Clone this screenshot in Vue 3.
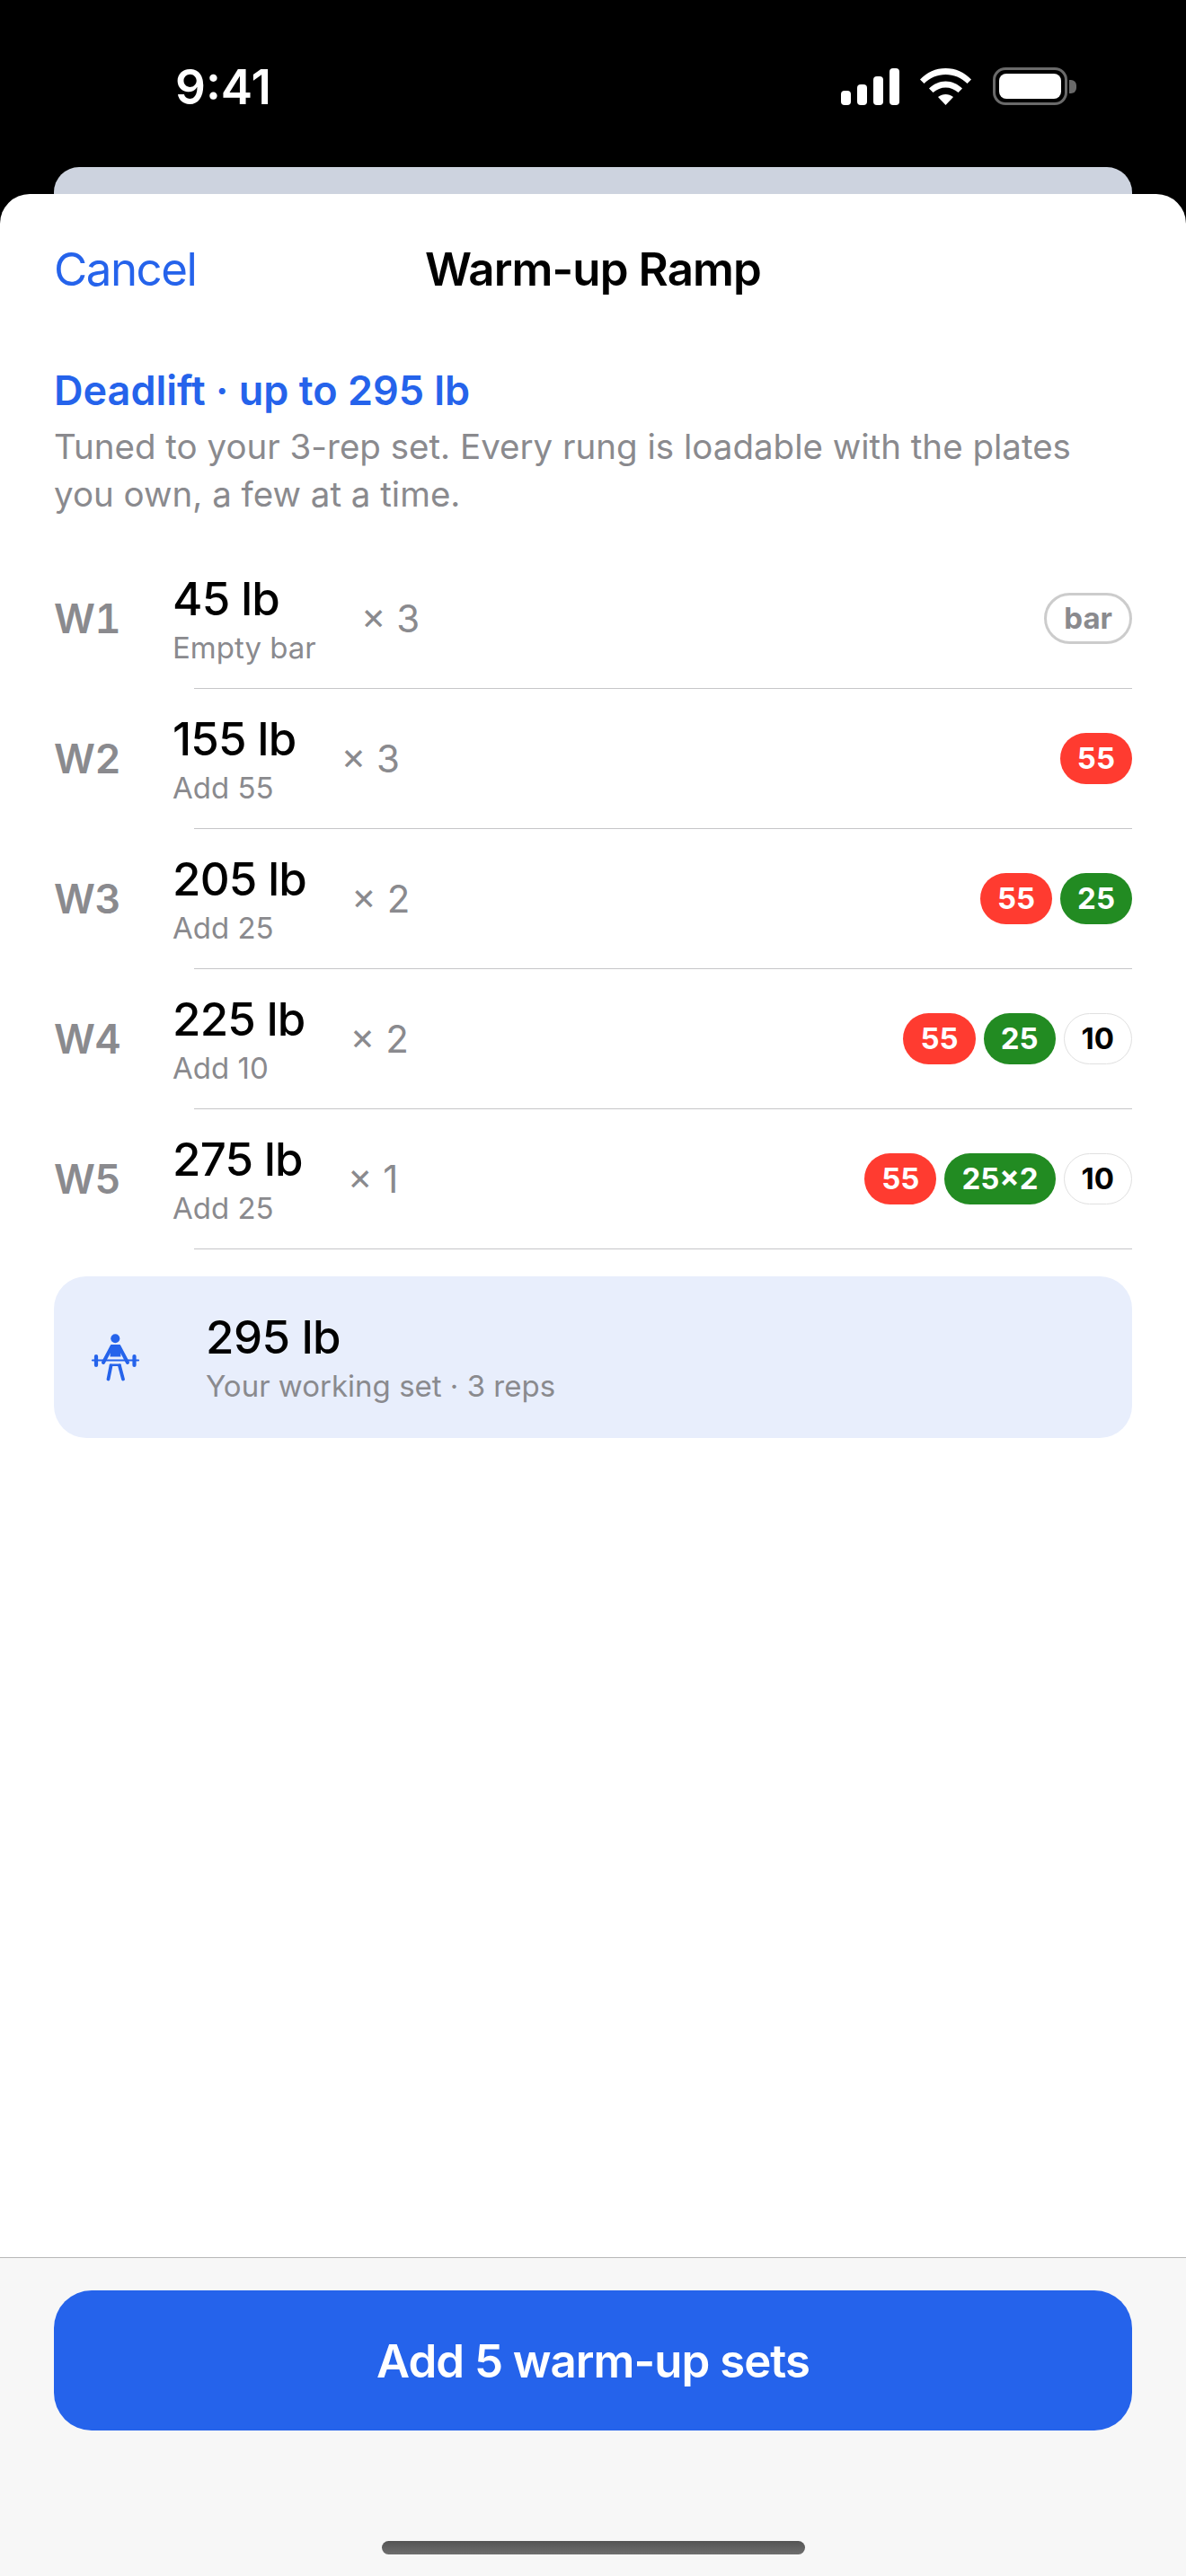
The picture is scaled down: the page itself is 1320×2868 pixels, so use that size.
<script setup>
const rungs = [
  { id: 'W1', weight: '45 lb', note: 'Empty bar', reps: '× 3', plates: [{ label: 'bar', kind: 'bar' }] },
  { id: 'W2', weight: '155 lb', note: 'Add 55', reps: '× 3', plates: [{ label: '55', kind: 'red' }] },
  {
    id: 'W3',
    weight: '205 lb',
    note: 'Add 25',
    reps: '× 2',
    plates: [
      { label: '55', kind: 'red' },
      { label: '25', kind: 'green' },
    ],
  },
  {
    id: 'W4',
    weight: '225 lb',
    note: 'Add 10',
    reps: '× 2',
    plates: [
      { label: '55', kind: 'red' },
      { label: '25', kind: 'green' },
      { label: '10', kind: 'white' },
    ],
  },
  {
    id: 'W5',
    weight: '275 lb',
    note: 'Add 25',
    reps: '× 1',
    plates: [
      { label: '55', kind: 'red' },
      { label: '25×2', kind: 'green' },
      { label: '10', kind: 'white' },
    ],
  },
]
</script>

<template>
  <div class="screen">
    <header class="status">
      <span class="status__time">9:41</span>
      <div class="status__icons">
        <svg class="status__signal" width="65" height="41" viewBox="0 0 65 41" fill="#fff">
          <rect x="0" y="25" width="11" height="16" rx="4" />
          <rect x="18" y="18" width="11" height="23" rx="4" />
          <rect x="36" y="9" width="11" height="32" rx="4" />
          <rect x="54" y="0" width="11" height="41" rx="4" />
        </svg>
        <svg class="status__wifi" width="57" height="41" viewBox="0 0 57 41" fill="#fff">
          <path d="M0 12.5C7.5 4.5 17.5 0 28.5 0S49.500 4.500 57 12.500L52.500 17C46 10.500 37.500 7 28.500 7S11 10.500 4.500 17Z" />
          <path d="M10 22.500C15 17.500 21.500 14.500 28.500 14.500S42 17.500 47 22.500L42.500 27C38.500 23.500 33.500 21.500 28.500 21.500S18.500 23.500 14.500 27Z" />
          <path d="M20 32C22.500 30 25.500 29 28.500 29S34.500 30 37 32L28.500 41Z" />
        </svg>
        <div class="battery">
          <div class="battery__body"><div class="battery__fill" /></div>
          <div class="battery__tip" />
        </div>
      </div>
    </header>

    <div class="behind" />

    <main class="sheet">
      <nav class="nav">
        <span class="nav__cancel">Cancel</span>
        <span class="nav__title">Warm-up Ramp</span>
        <span />
      </nav>

      <section class="intro">
        <h2 class="intro__title">Deadlift · up to 295 lb</h2>
        <p class="intro__text">Tuned to your 3-rep set. Every rung is loadable with the plates you own, a few at a time.</p>
      </section>

      <ul class="rungs">
        <li v-for="rung in rungs" :key="rung.id">
          <div class="rung">
            <span class="rung__id">{{ rung.id }}</span>
            <div class="rung__load">
              <span class="rung__weight">{{ rung.weight }}</span>
              <span class="rung__note">{{ rung.note }}</span>
            </div>
            <span class="rung__reps">{{ rung.reps }}</span>
            <div class="rung__plates">
              <span
                v-for="plate in rung.plates"
                :key="plate.label"
                class="plate"
                :class="`plate--${plate.kind}`"
              >{{ plate.label }}</span>
            </div>
          </div>
          <div class="rung__divider" />
        </li>
      </ul>

      <section class="working">
        <svg class="working__icon" width="58" height="56" viewBox="20 22 58 56" fill="none" stroke="#2563eb" stroke-linecap="round">
          <circle cx="48.300" cy="29.300" r="5" fill="#2563eb" stroke="none" />
          <path d="M43.500 36H53.500L54.500 49.500H42.500Z" fill="#2563eb" stroke="none" />
          <path d="M44.500 38L35 56M52.500 38L62 56" stroke-width="4" />
          <path d="M23 53.500H74" stroke-width="2.200" />
          <path d="M27 49V59M69.500 49V59" stroke-width="4.200" />
          <path d="M43.500 59.500L40.500 74.500M53 59.500L57 74.500" stroke-width="3.800" />
          <path d="M43 58.800H53.500" stroke-width="2.600" />
        </svg>
        <div class="working__text">
          <span class="working__weight">295 lb</span>
          <span class="working__note">Your working set · 3 reps</span>
        </div>
      </section>

      <footer class="footer">
        <button type="button" class="footer__add">Add 5 warm-up sets</button>
        <div class="footer__home" />
      </footer>
    </main>
  </div>
</template>

<style scoped>
.screen {
  width: 1320px;
  height: 2868px;
  display: flex;
  flex-direction: column;
  overflow: hidden;
  background: #000;
  font-family: Inter, "Liberation Sans", sans-serif;
}

.status {
  height: 186px;
  flex: 0 0 auto;
  display: flex;
  justify-content: space-between;
  padding: 72px 122px 0 195px;
  box-sizing: border-box;
}

.status__time {
  color: #fff;
  font-size: 53px;
  font-weight: 600;
  line-height: 50px;
}

.status__icons {
  display: flex;
  align-items: flex-start;
  padding-top: 4px;
}

.status__wifi {
  margin-left: 23px;
}

.battery {
  display: flex;
  align-items: center;
  margin-left: 24px;
  margin-top: -1px;
}

.battery__body {
  width: 83px;
  height: 42px;
  box-sizing: border-box;
  padding: 4px;
  border: 3px solid #6a6a6a;
  border-radius: 14px;
}

.battery__fill {
  height: 100%;
  border-radius: 8px;
  background: #fff;
}

.battery__tip {
  width: 8px;
  height: 15px;
  margin-left: 2px;
  border-radius: 0 6px 6px 0;
  background: #6a6a6a;
}

.behind {
  height: 30px;
  flex: 0 0 auto;
  margin: 0 60px;
  border-radius: 28px 28px 0 0;
  background: #cdd3df;
}

.sheet {
  flex: 1;
  min-height: 0;
  display: flex;
  flex-direction: column;
  border-radius: 33px 33px 0 0;
  background: #fff;
}

.nav {
  height: 167px;
  flex: 0 0 auto;
  display: grid;
  grid-template-columns: 1fr auto 1fr;
  align-items: center;
  padding: 0 60px;
}

.nav__cancel {
  color: #2563eb;
  font-size: 51px;
  letter-spacing: -1.500px;
}

.nav__title {
  color: #000;
  font-size: 51px;
  font-weight: 600;
  letter-spacing: -0.900px;
}

.intro {
  padding: 24px 60px 0;
}

.intro__title {
  margin: 0;
  color: #2563eb;
  font-size: 45px;
  font-weight: 600;
  line-height: 56px;
}

.intro__text {
  margin: 8px 0 0;
  color: #8a8a8e;
  font-size: 38.500px;
  line-height: 53px;
}

.rungs {
  margin: 34px 0 0;
  padding: 0;
  list-style: none;
}

.rung {
  height: 154.500px;
  display: flex;
  align-items: center;
  padding: 0 60px;
}

.rung__id {
  width: 132px;
  flex: 0 0 auto;
  color: #8a8a8e;
  font-size: 45px;
  font-weight: 600;
  font-variant-numeric: tabular-nums;
  letter-spacing: -0.500px;
}

.rung__load {
  display: flex;
  flex-direction: column;
  padding-top: 3px;
}

.rung__weight {
  color: #000;
  font-size: 51px;
  font-weight: 500;
  line-height: 60px;
  letter-spacing: -0.800px;
}

.rung__note {
  margin-top: 3px;
  color: #8a8a8e;
  font-size: 33px;
  line-height: 42px;
}

.rung__reps {
  margin-left: 50px;
  color: #8a8a8e;
  font-size: 42px;
}

.rung__plates {
  display: flex;
  gap: 9px;
  margin-left: auto;
}

.plate {
  height: 57px;
  box-sizing: border-box;
  display: flex;
  align-items: center;
  padding: 0 19px;
  border-radius: 28.500px;
  font-size: 33px;
  font-weight: 700;
}

.plate--red {
  background: #ff3b30;
  color: #fff;
}

.plate--green {
  background: #228b22;
  color: #fff;
}

.plate--white {
  border: 1.500px solid #e0e0e0;
  background: #fff;
  color: #000;
}

.plate--bar {
  border: 3px solid #cccccc;
  background: #fff;
  color: #8a8a8e;
}

.rung__divider {
  height: 1.500px;
  margin: 0 60px 0 216px;
  background: #c6c6c8;
}

.working {
  height: 180px;
  flex: 0 0 auto;
  display: flex;
  align-items: center;
  margin: 30px 60px 0;
  padding-left: 40px;
  border-radius: 36px;
  background: #e8eefc;
}

.working__text {
  display: flex;
  flex-direction: column;
  margin-left: 71px;
  padding-top: 2px;
}

.working__weight {
  color: #000;
  font-size: 51px;
  font-weight: 500;
  line-height: 60px;
  letter-spacing: -0.500px;
}

.working__note {
  margin-top: 2px;
  color: #8a8a8e;
  font-size: 33px;
  line-height: 44px;
}

.footer {
  height: 355px;
  flex: 0 0 auto;
  box-sizing: border-box;
  display: flex;
  flex-direction: column;
  align-items: center;
  margin-top: auto;
  padding-top: 36px;
  border-top: 1.500px solid #b8b8b8;
  background: #f7f7f7;
}

.footer__add {
  width: 1200px;
  height: 156px;
  flex: 0 0 auto;
  border: none;
  border-radius: 42px;
  background: #2563eb;
  color: #fff;
  font: 600 51px Inter, "Liberation Sans", sans-serif;
  letter-spacing: -1px;
}

.footer__home {
  width: 471px;
  height: 15px;
  flex: 0 0 auto;
  margin-top: 123px;
  border-radius: 8px;
  background: linear-gradient(#545454, #6e6e6e);
}
</style>

<style>
body {
  background: #000;
}
</style>
